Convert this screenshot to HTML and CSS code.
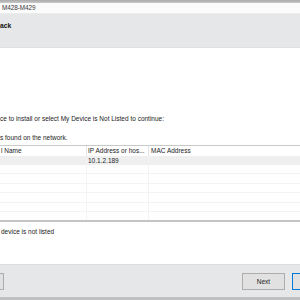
FILE: index.html
```html
<!DOCTYPE html>
<html>
<head>
<meta charset="utf-8">
<link rel="stylesheet" href="styles.css">
</head>
<body>
<div class="win">
  <div class="topstrip"></div>
  <div class="titlebar">M428-M429</div>
  <div class="header"><span class="htitle">ack</span></div>
  <div class="content">
    <div class="line l1">ce to install or select My Device is Not Listed to continue:</div>
    <div class="line l2">s found on the network.</div>
    <div class="table">
      <div class="row head">
        <div class="c c1">l Name</div>
        <div class="c c2">IP Address or hos...</div>
        <div class="c c3">MAC Address</div>
      </div>
      <div class="row sel">
        <div class="c c1"></div>
        <div class="c c2">10.1.2.189</div>
        <div class="c c3"></div>
      </div>
      <div class="row"><div class="c c1"></div><div class="c c2"></div><div class="c c3"></div></div>
      <div class="row tall"><div class="c c1"></div><div class="c c2"></div><div class="c c3"></div></div>
      <div class="row"><div class="c c1"></div><div class="c c2"></div><div class="c c3"></div></div>
      <div class="row tall"><div class="c c1"></div><div class="c c2"></div><div class="c c3"></div></div>
      <div class="row"><div class="c c1"></div><div class="c c2"></div><div class="c c3"></div></div>
      <div class="filler"><div class="c c1"></div><div class="c c2"></div><div class="c c3"></div></div>
    </div>
    <div class="line l3">device is not listed</div>
  </div>
  <div class="footer">
    <button class="btn back" aria-label="Back"></button>
    <span class="spacer"></span>
    <button class="btn next">Next</button>
    <button class="btn def" aria-label="Cancel"></button>
  </div>
  <div class="bottom"></div>
</div>
</body>
</html>
```
FILE: styles.css
```css
html, body {
  margin: 0;
  padding: 0;
  width: 300px;
  height: 300px;
  overflow: hidden;
  background: #ffffff;
}
.win {
  width: 300px;
  height: 300px;
  display: flex;
  flex-direction: column;
  font-family: "Liberation Sans", Arial, sans-serif;
  font-size: 6.5px;
  color: #1b1b1b;
  overflow: hidden;
}
.topstrip {
  height: 3px;
  background: linear-gradient(#a9a9a9, #c9c9c9);
}
.titlebar {
  height: 11px;
  line-height: 10px;
  padding-left: 2px;
  background: #fbfbfb;
  color: #3a3a3a;
  font-size: 6.3px;
  border-bottom: 1px solid #eaecee;
  box-sizing: border-box;
}
.header {
  height: 34px;
  background: #e6e7e8;
  box-sizing: border-box;
  padding-top: 8px;
  border-bottom: 1px solid #dfe0e1;
}
.htitle {
  font-weight: bold;
  font-size: 6.8px;
  line-height: 8px;
  color: #111;
}
.content {
  height: 216px;
  display: flex;
  flex-direction: column;
  background: #fff;
}
.line {
  height: 8px;
  line-height: 8px;
  white-space: nowrap;
}
.l1 { margin-top: 67px; }
.l2 { margin-top: 11px; }
.l3 { margin-top: 6px; padding-left: 1px; }
.table {
  margin-top: 3px;
  border-top: 1px solid #c9c9c9;
  border-bottom: 2px solid #c4c4c4;
  display: flex;
  flex-direction: column;
}
.row {
  display: flex;
  height: 9px;
  box-sizing: border-box;
  border-bottom: 1px solid #f3f3f3;
}
.row.tall { height: 10px; }
.row.head {
  height: 10px;
  border-bottom: none;
}
.row.sel {
  background: #efefef;
  border-bottom: none;
}
.filler {
  display: flex;
  height: 8px;
}
.c {
  line-height: 9px;
  white-space: nowrap;
  overflow: hidden;
  box-sizing: border-box;
}
.c1 {
  width: 87px;
  padding-left: 1px;
  border-right: 1px solid #f3f3f3;
}
.c2 {
  width: 62px;
  padding-left: 1px;
  border-right: 1px solid #f3f3f3;
}
.c3 {
  flex: 1;
  padding-left: 2px;
}
.head .c1, .head .c2 { border-right-color: #e4e4e4; }
.footer {
  height: 33px;
  background: #e6e7e8;
  border-top: 1px solid #dcdddf;
  box-sizing: border-box;
  display: flex;
  align-items: center;
  padding-top: 1px;
}
.btn {
  height: 17px;
  width: 43px;
  flex: none;
  box-sizing: border-box;
  background: #e1e1e1;
  border: 1px solid #adadad;
  font-family: "Liberation Sans", Arial, sans-serif;
  font-size: 6.5px;
  color: #1b1b1b;
  padding: 0;
  margin: 0;
}
.back { margin-left: -39px; }
.spacer { flex: 1; }
.next { margin-right: 7px; }
.def {
  border-color: #0078d7;
  margin-right: -35px;
}
.bottom {
  height: 3px;
  background: #bfc0c1;
}
```
